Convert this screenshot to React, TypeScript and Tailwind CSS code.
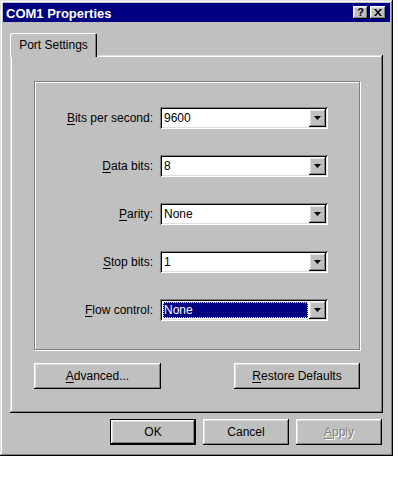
import React from 'react'

const raised =
  'shadow-[inset_-1px_-1px_#000,inset_1px_1px_#fff,inset_-2px_-2px_#808080,inset_2px_2px_#dfdfdf]'
const windowEdge =
  'shadow-[inset_-1px_-1px_#000,inset_1px_1px_#dfdfdf,inset_-2px_-2px_#808080,inset_2px_2px_#fff]'
const sunken =
  'shadow-[inset_1px_1px_#808080,inset_-1px_-1px_#fff,inset_2px_2px_#000,inset_-2px_-2px_#dfdfdf]'

function Mn({ children }: { children: React.ReactNode }) {
  return <span className="underline underline-offset-[2px] decoration-[1px]">{children}</span>
}

function Arrow() {
  return (
    <svg width="7" height="4" viewBox="0 0 7 4">
      <path d="M0 0h7L3.5 4z" fill="#000" />
    </svg>
  )
}

function Combo({ label, value, selected }: { label: React.ReactNode; value: string; selected?: boolean }) {
  return (
    <div className="flex items-center h-[22px]">
      <div className="w-[125px] pr-[7px] text-right whitespace-nowrap">{label}</div>
      <div className={`w-[168px] h-[22px] bg-white flex items-stretch p-[2px] ${sunken}`}>
        <div className="flex-1 flex items-stretch p-[1px]">
          {selected ? (
            <div className="flex-1 bg-[#000080] text-white flex items-center pl-[1px] outline-1 outline-dotted outline-[#ffff00] -outline-offset-1">
              {value}
            </div>
          ) : (
            <div className="flex-1 flex items-center pl-[1px]">{value}</div>
          )}
        </div>
        <div className={`w-[17px] bg-[#c0c0c0] flex items-center justify-center ${raised}`}>
          <Arrow />
        </div>
      </div>
    </div>
  )
}

function Btn({
  children,
  w,
  isDefault,
  disabled,
}: {
  children: React.ReactNode
  w: string
  isDefault?: boolean
  disabled?: boolean
}) {
  const inner = (
    <div
      className={`flex-1 h-full flex items-center justify-center ${raised} ${
        disabled ? 'text-[#808080] [text-shadow:1px_1px_#fff]' : ''
      }`}
    >
      {children}
    </div>
  )
  if (isDefault) {
    return <div className={`${w} h-[26px] border border-black flex`}>{inner}</div>
  }
  return <div className={`${w} h-[26px] flex`}>{inner}</div>
}

export default function App() {
  return (
    <div className="w-[398px] h-[478px] bg-white text-[12px] text-black font-['Liberation_Sans',Arial,sans-serif]">
      <div className={`w-[393px] h-[456px] bg-[#c0c0c0] p-[3px] flex flex-col ${windowEdge}`}>
        {/* title bar */}
        <div className="h-[19px] bg-[#000080] flex items-center justify-between pl-[3px] pr-[4px]">
          <span className="text-white font-bold text-[13px] leading-none pt-[1px]">COM1 Properties</span>
          <div className="flex gap-[2px]">
            <div className={`w-[15px] h-[13px] bg-[#c0c0c0] flex items-center justify-center font-bold text-[11px] leading-none ${raised}`}>
              ?
            </div>
            <div className={`w-[16px] h-[13px] bg-[#c0c0c0] flex items-center justify-center ${raised}`}>
              <svg width="8" height="7" viewBox="0 0 8 7">
                <path d="M0 0h2l2 2.5L6 0h2L5 3.5 8 7H6L4 4.5 2 7H0l3-3.5z" fill="#000" />
              </svg>
            </div>
          </div>
        </div>

        <div className="pl-[7px] pt-[11px] flex flex-col">
          {/* tab */}
          <div className="relative z-10 -mb-[2px] w-[87px] h-[24px] bg-[#c0c0c0] rounded-t-[2px] shadow-[inset_1px_1px_#fff,inset_-1px_0_#000,inset_-2px_0_#808080] flex items-center justify-center">
            Port Settings
          </div>

          {/* panel */}
          <div className={`w-[373px] h-[358px] flex flex-col pt-[26px] px-[24px] ${windowEdge}`}>
            <div className="w-[326px] h-[269px] border border-[#808080] shadow-[1px_1px_#fff,inset_1px_1px_#fff] flex flex-col gap-[26px] pt-[25px]">
              <Combo label={<><Mn>B</Mn>its per second:</>} value="9600" />
              <Combo label={<><Mn>D</Mn>ata bits:</>} value="8" />
              <Combo label={<><Mn>P</Mn>arity:</>} value="None" />
              <Combo label={<><Mn>S</Mn>top bits:</>} value="1" />
              <Combo label={<><Mn>F</Mn>low control:</>} value="None" selected />
            </div>
            <div className="flex justify-between mt-[13px] w-[326px]">
              <Btn w="w-[127px]">
                <span><Mn>A</Mn>dvanced...</span>
              </Btn>
              <Btn w="w-[126px]">
                <span><Mn>R</Mn>estore Defaults</span>
              </Btn>
            </div>
          </div>

          {/* dialog buttons */}
          <div className="flex justify-end gap-[7px] mt-[6px] w-[372px]">
            <Btn w="w-[86px]" isDefault>
              OK
            </Btn>
            <Btn w="w-[86px]">Cancel</Btn>
            <Btn w="w-[86px]" disabled>
              <span><Mn>A</Mn>pply</span>
            </Btn>
          </div>
        </div>
      </div>
    </div>
  )
}
